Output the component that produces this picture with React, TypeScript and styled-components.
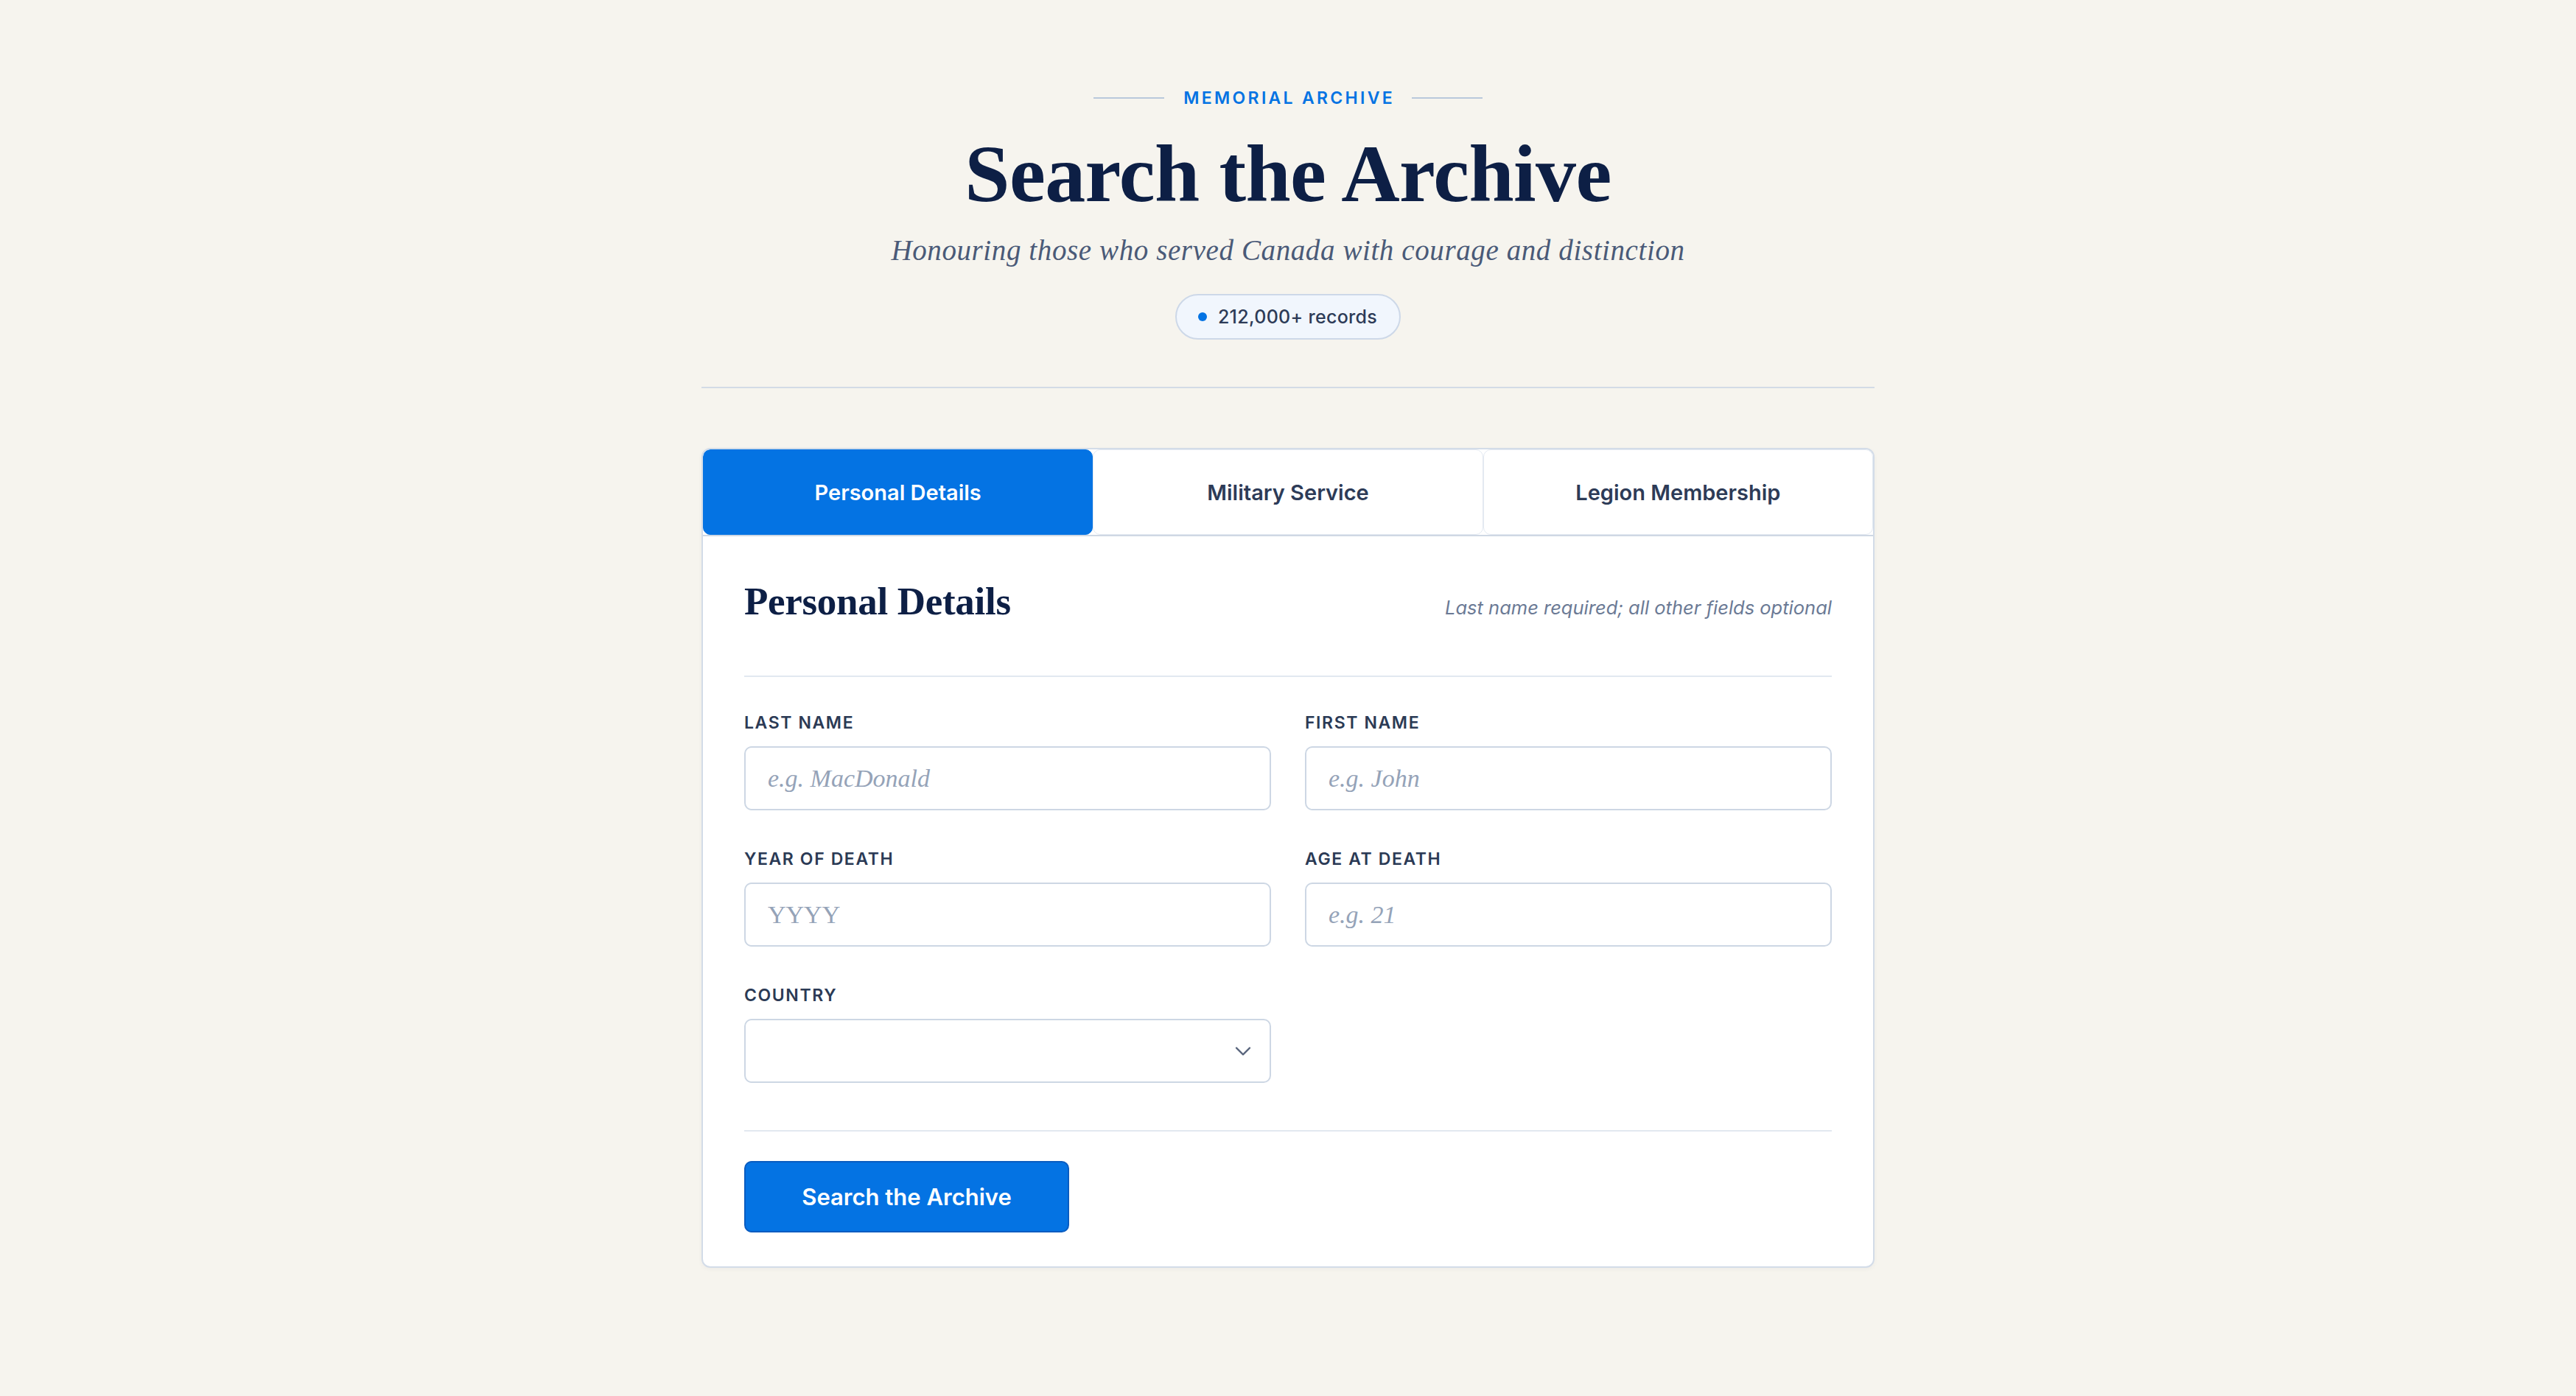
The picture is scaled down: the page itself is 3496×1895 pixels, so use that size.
import React from 'react';
import styled, { createGlobalStyle } from 'styled-components';
import { ChevronDown } from 'lucide-react';

const BLUE = '#0473e3';
const NAVY = '#0d1f45';
const SERIF = `"Liberation Serif", "DejaVu Serif", serif`;
const SANS = `Inter, "Liberation Sans", sans-serif`;

const tabs = ['Personal Details', 'Military Service', 'Legion Membership'];

interface FieldDef {
  label: string;
  placeholder?: string;
  upright?: boolean;
  select?: boolean;
}

const fields: FieldDef[] = [
  { label: 'Last Name', placeholder: 'e.g. MacDonald' },
  { label: 'First Name', placeholder: 'e.g. John' },
  { label: 'Year of Death', placeholder: 'YYYY', upright: true },
  { label: 'Age at Death', placeholder: 'e.g. 21' },
  { label: 'Country', select: true },
];

export default function App() {
  const [active, setActive] = React.useState(0);

  return (
    <>
      <GlobalStyle />
      <Page>
        <Hero>
          <Eyebrow>
            <EyebrowText>Memorial Archive</EyebrowText>
          </Eyebrow>
          <Title>Search the Archive</Title>
          <Subtitle>Honouring those who served Canada with courage and distinction</Subtitle>
          <Badge>
            <Dot />
            212,000+ records
          </Badge>
        </Hero>

        <Rule />

        <Card>
          <TabList>
            {tabs.map((t, i) => (
              <Tab key={t} $active={i === active} onClick={() => setActive(i)}>
                {t}
              </Tab>
            ))}
          </TabList>

          <Body>
            <SectionHeader>
              <SectionTitle>Personal Details</SectionTitle>
              <Hint>Last name required; all other fields optional</Hint>
            </SectionHeader>

            <FieldGrid>
              {fields.map(f => (
                <Field key={f.label}>
                  <Label>{f.label}</Label>
                  {f.select ? (
                    <SelectWrap>
                      <Select defaultValue="">
                        <option value="" />
                        <option value="ca">Canada</option>
                        <option value="fr">France</option>
                        <option value="be">Belgium</option>
                      </Select>
                      <Chevron>
                        <ChevronDown size={36} strokeWidth={1.6} />
                      </Chevron>
                    </SelectWrap>
                  ) : (
                    <Input placeholder={f.placeholder} $upright={f.upright} />
                  )}
                </Field>
              ))}
            </FieldGrid>

            <Footer>
              <SubmitButton type="button">Search the Archive</SubmitButton>
            </Footer>
          </Body>
        </Card>
      </Page>
    </>
  );
}

// Styled Components
const GlobalStyle = createGlobalStyle`
  html, body {
    margin: 0;
    background: #f6f4ee;
  }
  body {
    font-family: ${SANS};
    -webkit-font-smoothing: antialiased;
  }
  * {
    box-sizing: border-box;
  }
`;

const Page = styled.main`
  min-height: 100vh;
  padding: 119px 0 120px;
  display: flex;
  flex-direction: column;
  align-items: center;
`;

const Hero = styled.header`
  display: flex;
  flex-direction: column;
  align-items: center;
`;

const Eyebrow = styled.div`
  display: flex;
  align-items: center;
  gap: 26px;

  &::before,
  &::after {
    content: '';
    width: 96px;
    height: 2px;
    background: #b9c8dc;
  }
`;

const EyebrowText = styled.span`
  font: 600 23px/28px ${SANS};
  letter-spacing: 3.3px;
  margin-right: -3.3px;
  text-transform: uppercase;
  color: ${BLUE};
`;

const Title = styled.h1`
  margin: 30px 0 0;
  font: 700 110px/119px ${SERIF};
  letter-spacing: -0.6px;
  color: ${NAVY};
`;

const Subtitle = styled.p`
  margin: 20px 0 0;
  font: italic 400 39px/48px ${SERIF};
  letter-spacing: 0.6px;
  color: #4a5a78;
`;

const Badge = styled.div`
  margin-top: 35px;
  height: 62px;
  display: inline-flex;
  align-items: center;
  gap: 15px;
  padding: 0 30px 0 29px;
  border: 2px solid #cdd8e8;
  border-radius: 999px;
  background: #f1f6fd;
  font: 500 25px/1 ${SANS};
  letter-spacing: 0.3px;
  color: #2d3b57;
`;

const Dot = styled.span`
  width: 12px;
  height: 12px;
  border-radius: 50%;
  background: ${BLUE};
`;

const Rule = styled.hr`
  width: 1592px;
  height: 2px;
  margin: 64px 0 0;
  border: none;
  background: #d3dbe6;
`;

const Card = styled.section`
  margin-top: 81px;
  width: 1592px;
  background: #ffffff;
  border: 2px solid #d3dce8;
  border-radius: 12px;
  overflow: hidden;
  box-shadow: 0 2px 6px rgba(13, 31, 69, 0.04);
`;

const TabList = styled.nav`
  display: grid;
  grid-template-columns: repeat(3, 1fr);
  height: 118px;
  border-bottom: 2px solid #cfd8e4;
`;

const Tab = styled.button<{ $active?: boolean }>`
  border: 1px solid ${p => (p.$active ? BLUE : '#e3e9f1')};
  border-radius: 10px;
  background: ${p => (p.$active ? BLUE : '#ffffff')};
  color: ${p => (p.$active ? '#ffffff' : '#2d3b57')};
  font: 600 29px/1 ${SANS};
  cursor: pointer;
`;

const Body = styled.div`
  padding: 57px 56px 46px;
`;

const SectionHeader = styled.div`
  display: flex;
  justify-content: space-between;
  align-items: baseline;
  padding-bottom: 70px;
  border-bottom: 2px solid #e2e8f0;
`;

const SectionTitle = styled.h2`
  margin: 0;
  font: 700 53px/62px ${SERIF};
  letter-spacing: -0.3px;
  color: ${NAVY};
`;

const Hint = styled.span`
  font: italic 400 25.5px/35px ${SANS};
  color: #6b7a95;
`;

const FieldGrid = styled.div`
  margin-top: 48px;
  display: grid;
  grid-template-columns: 1fr 1fr;
  column-gap: 46px;
  row-gap: 52px;
`;

const Field = styled.label`
  display: flex;
  flex-direction: column;
  gap: 18px;
`;

const Label = styled.span`
  font: 600 23px/28px ${SANS};
  letter-spacing: 1.6px;
  text-transform: uppercase;
  color: #2b3a55;
`;

const inputBase = `
  width: 100%;
  height: 87px;
  border: 2px solid #cdd7e4;
  border-radius: 10px;
  background: #ffffff;
  outline: none;
`;

const Input = styled.input<{ $upright?: boolean }>`
  ${inputBase}
  padding: 0 30px;
  font: ${p => (p.$upright ? 'normal' : 'italic')} 400 34px ${SERIF};
  color: ${NAVY};

  &::placeholder {
    color: #95a3b8;
  }
`;

const SelectWrap = styled.div`
  position: relative;
`;

const Select = styled.select`
  ${inputBase}
  appearance: none;
  padding: 0 80px 0 30px;
  font: 400 30px ${SANS};
  color: ${NAVY};
`;

const Chevron = styled.span`
  position: absolute;
  right: 20px;
  top: 50%;
  transform: translateY(-50%);
  display: flex;
  color: #56627a;
  pointer-events: none;
`;

const Footer = styled.div`
  margin-top: 64px;
  padding-top: 40px;
  border-top: 2px solid #e2e8f0;
`;

const SubmitButton = styled.button`
  width: 441px;
  height: 97px;
  background: ${BLUE};
  border: 2px solid #0a5cc0;
  border-radius: 10px;
  color: #ffffff;
  font: 600 31px/1 ${SANS};
  cursor: pointer;
`;
